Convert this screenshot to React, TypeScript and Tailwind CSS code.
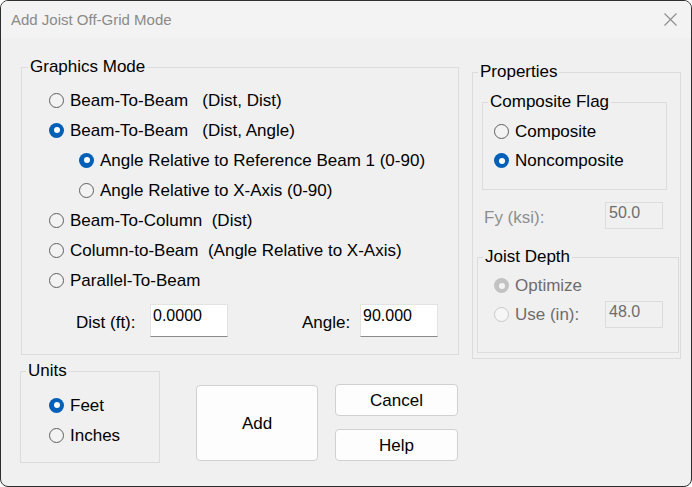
import React from 'react';

// Radio dot drawn like the Windows 11 control
function Dot({ on, disabled }: { on?: boolean; disabled?: boolean }) {
  if (on && disabled) {
    return (
      <span className="w-[15px] h-[15px] rounded-full bg-[#c2c2c2] flex items-center justify-center shrink-0">
        <span className="w-[6px] h-[6px] rounded-full bg-[#f4f4f4]" />
      </span>
    );
  }
  if (on) {
    return (
      <span className="w-[15px] h-[15px] rounded-full bg-[#005fb8] flex items-center justify-center shrink-0">
        <span className="w-[6px] h-[6px] rounded-full bg-white" />
      </span>
    );
  }
  return (
    <span
      className={
        disabled
          ? 'w-[15px] h-[15px] rounded-full border border-[#c9c9c9] bg-[#f6f6f6] shrink-0'
          : 'w-[15px] h-[15px] rounded-full border border-[#5f5f5f] bg-[#f3f3f3] shrink-0'
      }
    />
  );
}

function Radio({
  label,
  on,
  disabled,
  h = 'h-[30px]',
}: {
  label: string;
  on?: boolean;
  disabled?: boolean;
  h?: string;
}) {
  return (
    <div className={`${h} flex items-center`}>
      <Dot on={on} disabled={disabled} />
      <span className={`ml-[6px] pt-[1px] whitespace-pre ${disabled ? 'text-[#6d6d6d]' : 'text-black'}`}>{label}</span>
    </div>
  );
}

function Box({ value, disabled, w, h }: { value: string; disabled?: boolean; w: string; h: string }) {
  return (
    <div
      className={
        disabled
          ? `${w} ${h} shrink-0 border border-[#dcdcdc] bg-[#f0f0f0] text-[#6d6d6d] pl-[3px] text-[16px] leading-[20px]`
          : `${w} ${h} shrink-0 border border-[#e3e3e3] border-b-[#8a8a8a] bg-white text-black pl-[2px] pt-[1px] text-[16px] leading-[20px]`
      }
    >
      {value}
    </div>
  );
}

export default function App() {
  return (
    <div
      className="w-[692px] h-[487px] rounded-[8px] border border-[#2e2e2e] bg-[#f0f0f0] overflow-hidden flex flex-col text-[17px] leading-[20px] text-black"
      style={{ fontFamily: '"Liberation Sans", Arial, sans-serif' }}
    >
      {/* title bar */}
      <div className="h-[37px] shrink-0 bg-[#f3f3f3] flex items-center justify-between pl-[10px] pr-[14px]">
        <span className="text-[15px] text-[#8a8a8a] pt-[1px]">Add Joist Off-Grid Mode</span>
        <svg width="13" height="13" viewBox="0 0 13 13" className="block">
          <path d="M0.5 0.5 L12.5 12.5 M12.5 0.5 L0.5 12.5" stroke="#8c8c8c" strokeWidth="1.1" fill="none" />
        </svg>
      </div>

      <div className="flex pl-[19px]">
        {/* left column */}
        <div className="w-[439px] flex flex-col pt-[19px]">
          <fieldset className="ml-[1px] w-[438px] h-[298px] border border-[#dcdcdc]">
            <legend className="ml-[6px] px-[2px]">Graphics Mode</legend>
            <div className="pt-[8px] pl-[27px]">
              <Radio label="Beam-To-Beam   (Dist, Dist)" />
              <Radio label="Beam-To-Beam   (Dist, Angle)" on />
              <div className="pl-[30px]">
                <Radio label="Angle Relative to Reference Beam 1 (0-90)" on />
                <Radio label="Angle Relative to X-Axis (0-90)" />
              </div>
              <Radio label="Beam-To-Column  (Dist)" />
              <Radio label="Column-to-Beam  (Angle Relative to X-Axis)" />
              <Radio label="Parallel-To-Beam" />
            </div>
            <div className="mt-[9px] ml-[54px] flex items-center">
              <span className="w-[74px] pt-[5px]">Dist (ft):</span>
              <Box value="0.0000" w="w-[78px]" h="h-[33px]" />
              <span className="w-[74px]" />
              <span className="w-[58px] pt-[5px]">Angle:</span>
              <Box value="90.000" w="w-[78px]" h="h-[33px]" />
            </div>
          </fieldset>

          <div className="flex items-start mt-[6px]">
            <fieldset className="w-[140px] h-[102px] border border-[#dcdcdc]">
              <legend className="ml-[5px] px-[2px]">Units</legend>
              <div className="pt-[9px] pl-[28px]">
                <Radio label="Feet" on />
                <Radio label="Inches" />
              </div>
            </fieldset>
            <button className="ml-[36px] mt-[24px] w-[122px] h-[76px] pt-[2px] rounded-[4px] border border-[#d0d0d0] bg-[#fdfdfd] text-black">
              Add
            </button>
            <div className="ml-[17px] mt-[23px] flex flex-col">
              <button className="w-[123px] h-[32px] pt-[2px] rounded-[4px] border border-[#d0d0d0] bg-[#fdfdfd] text-black">
                Cancel
              </button>
              <button className="mt-[13px] w-[123px] h-[32px] pt-[2px] rounded-[4px] border border-[#d0d0d0] bg-[#fdfdfd] text-black">
                Help
              </button>
            </div>
          </div>
        </div>

        {/* right column */}
        <div className="ml-[13px] pt-[24px]">
          <fieldset className="w-[209px] h-[297px] border border-[#dcdcdc]">
            <legend className="ml-[5px] px-[2px]">Properties</legend>
            <fieldset className="mt-[10px] ml-[9px] w-[185px] h-[98px] border border-[#dcdcdc]">
              <legend className="ml-[5px] px-[2px]">Composite Flag</legend>
              <div className="pt-[5px] pl-[11px]">
                <Radio label="Composite" h="h-[29px]" />
                <Radio label="Noncomposite" on h="h-[29px]" />
              </div>
            </fieldset>

            <div className="mt-[12px] pl-[11px] flex items-center">
              <span className="w-[121px] text-[#8e8e8e] pt-[4px]">Fy (ksi):</span>
              <Box value="50.0" disabled w="w-[58px]" h="h-[27px]" />
            </div>

            <fieldset className="mt-[18px] ml-[4px] w-[202px] h-[106px] border border-[#dcdcdc]">
              <legend className="ml-[5px] px-[2px]">Joist Depth</legend>
              <div className="pt-[4px] pl-[16px]">
                <Radio label="Optimize" on disabled h="h-[29px]" />
                <div className="h-[29px] flex items-center">
                  <Dot disabled />
                  <span className="ml-[6px] pt-[1px] w-[90px] text-[#6d6d6d]">Use (in):</span>
                  <Box value="48.0" disabled w="w-[58px]" h="h-[27px]" />
                </div>
              </div>
            </fieldset>
          </fieldset>
        </div>
      </div>
    </div>
  );
}
